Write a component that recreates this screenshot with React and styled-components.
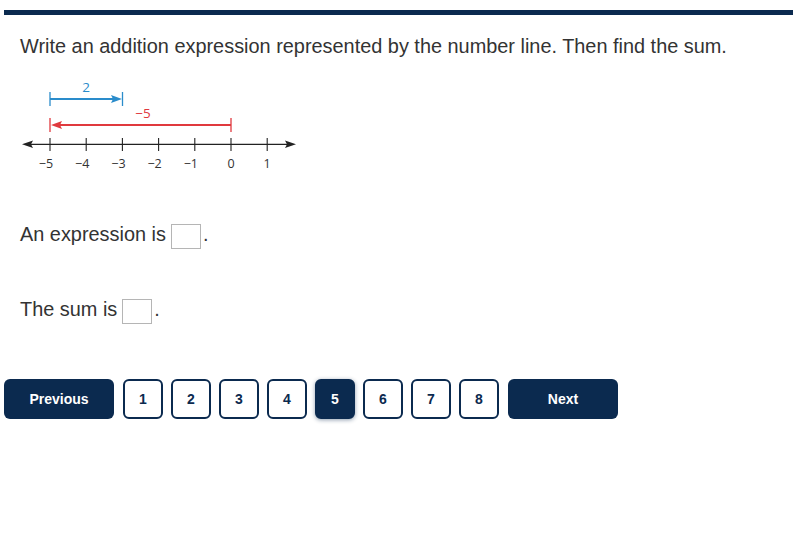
import React from "react";
import styled, { createGlobalStyle } from "styled-components";

const GlobalStyle = createGlobalStyle`
    body {
        margin: 0;
        background: #fff;
        font-family: "Liberation Sans", Arial, sans-serif;
    }
`;

const Page = styled.div`
    width: 793px;
    height: 533px;
    padding: 10px 0 0 4px;
    box-sizing: border-box;
`;

const TopBar = styled.div`
    height: 5px;
    background-color: #0b2a4f;
`;

const Question = styled.div`
    padding: 20px 0 0 16px;
    color: #333;
    font-size: 19.9px;
`;

const Prompt = styled.p`
    margin: 0;
    line-height: 22px;
`;

const Figure = styled.svg`
    display: block;
    margin: 15px 0 0 0;
`;

const Line = styled.p`
    margin: ${(p) => p.top}px 0 0 0;
    display: flex;
    align-items: flex-start;
    line-height: 22px;
`;

const AnswerBox = styled.span`
    display: inline-block;
    width: 28px;
    height: 23px;
    margin: 1px 2px 0 5px;
    border: 1px solid #b5b5b5;
    background: #fff;
`;

const Pager = styled.nav`
    display: flex;
    align-items: center;
    gap: 8px;
    margin-top: 55px;
`;

const NavButton = styled.button`
    width: 110px;
    height: 40px;
    margin: 0 ${(p) => p.mr || 0}px 0 ${(p) => p.ml || 0}px;
    border: none;
    border-radius: 6px;
    background-color: #0b2a4f;
    color: #fff;
    font-family: "Liberation Sans", Arial, sans-serif;
    font-weight: bold;
    font-size: 14px;
    cursor: pointer;
`;

const PageButton = styled.button`
    width: 40px;
    height: 40px;
    box-sizing: border-box;
    border: 2px solid #0b2a4f;
    border-radius: 6px;
    background-color: ${(p) => (p.active ? "#0b2a4f" : "#fff")};
    color: ${(p) => (p.active ? "#fff" : "#0b2a4f")};
    box-shadow: ${(p) => (p.active ? "0 1px 4px rgba(11,42,79,0.45)" : "none")};
    font-family: "Liberation Sans", Arial, sans-serif;
    font-weight: bold;
    font-size: 14px;
    cursor: pointer;
`;

const BLUE = "#2a8ccb";
const RED = "#e0393e";

const NumberLine = () => {
    // x of -5 is 30 (page x 50), step 36.2
    const xs = [-5, -4, -3, -2, -1, 0, 1].map((n, i) => ({ n, x: 30 + i * 36.2 }));
    return (
        <Figure width="280" height="100" viewBox="0 0 280 100">
            {/* blue 2 */}
            <text x="66" y="20" fill={BLUE} fontSize="13.5" fontFamily="'Open Sans', sans-serif" textAnchor="middle">2</text>
            <line x1="30" y1="20" x2="30" y2="34" stroke={BLUE} strokeWidth="1.3" />
            <line x1="102.5" y1="20" x2="102.5" y2="34" stroke={BLUE} strokeWidth="1.3" />
            <line x1="30" y1="27" x2="96" y2="27" stroke={BLUE} strokeWidth="2" />
            <path d="M102 27 L91 23 L93 27 L91 31 Z" fill={BLUE} />
            {/* red -5 */}
            <text x="123" y="46" fill={RED} fontSize="13.5" fontFamily="'Open Sans', sans-serif" textAnchor="middle">−5</text>
            <line x1="30" y1="46" x2="30" y2="60" stroke={RED} strokeWidth="1.3" />
            <line x1="211" y1="46" x2="211" y2="60" stroke={RED} strokeWidth="1.3" />
            <line x1="37" y1="53" x2="211" y2="53" stroke={RED} strokeWidth="2" />
            <path d="M31 53 L42 49 L40 53 L42 57 Z" fill={RED} />
            {/* axis */}
            <line x1="6" y1="72.3" x2="270" y2="72.3" stroke="#222" strokeWidth="1.3" />
            <path d="M2 72.3 L13 68.5 L11 72.3 L13 76 Z" fill="#222" />
            <path d="M276 72.3 L265 68.5 L267 72.3 L265 76 Z" fill="#222" />
            {xs.map(({ n, x }) => (
                <g key={n}>
                    <line x1={x} y1="66" x2={x} y2="79" stroke="#222" strokeWidth="1.1" />
                    <text x={n < 0 ? x - 4 : x} y="96" fill="#333" fontSize="12.5" fontFamily="'Open Sans', sans-serif" textAnchor="middle">
                        {n < 0 ? `−${-n}` : n}
                    </text>
                </g>
            ))}
        </Figure>
    );
};

const App = () => {
    const pages = [1, 2, 3, 4, 5, 6, 7, 8];
    return (
        <Page>
            <GlobalStyle />
            <TopBar />
            <Question>
                <Prompt>Write an addition expression represented by the number line. Then find the sum.</Prompt>
                <NumberLine />
                <Line top={51}>
                    An expression is<AnswerBox />.
                </Line>
                <Line top={49}>
                    The sum is<AnswerBox />.
                </Line>
            </Question>
            <Pager>
                <NavButton mr={1}>Previous</NavButton>
                {pages.map((n) => (
                    <PageButton key={n} active={n === 5}>{n}</PageButton>
                ))}
                <NavButton ml={1}>Next</NavButton>
            </Pager>
        </Page>
    );
};

export default App;
